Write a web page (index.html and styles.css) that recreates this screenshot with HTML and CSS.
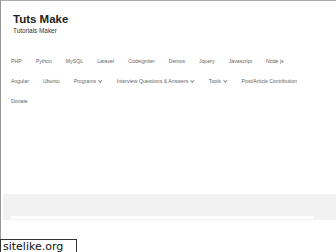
FILE: index.html
```html
<!DOCTYPE html>
<html lang="en">
<head>
    <meta charset="UTF-8">
    <meta name="viewport" content="width=device-width, initial-scale=1.0">
    <title>Tuts Make</title>
    <link rel="stylesheet" href="styles.css">
</head>
<body>
    <div class="page">
        <header class="site-header">
            <div class="site-title">Tuts Make</div>
            <div class="site-desc">Tutorials Maker</div>
        </header>
        <nav class="menu">
            <a href="#">PHP</a>
            <a href="#">Python</a>
            <a href="#">MySQL</a>
            <a href="#">Laravel</a>
            <a href="#">Codeigniter</a>
            <a href="#">Demos</a>
            <a href="#">Jquery</a>
            <a href="#">Javascript</a>
            <a href="#">Node js</a>
            <a href="#">Angular</a>
            <a href="#">Ubuntu</a>
            <a href="#" class="has-sub">Programs</a>
            <a href="#" class="has-sub">Interview Questions &amp; Answers</a>
            <a href="#" class="has-sub">Tools</a>
            <a href="#">Post/Article Contribution</a>
            <a href="#">Donate</a>
        </nav>
        <div class="content"></div>
        <div class="band">
            <div class="band-bar"></div>
        </div>
    </div>
    <div class="stamp">sitelike.org</div>
</body>
</html>
```

FILE: styles.css
```css
body {
    margin: 0;
    background: #fff;
    font-family: "Liberation Sans", Arial, sans-serif;
}
.page {
    border-top: 1px solid #aaa;
    border-left: 1px solid #999;
    height: 239px;
    box-sizing: border-box;
}
.site-header {
    padding: 11px 0 0 12px;
}
.site-title {
    font-size: 11.5px;
    font-weight: bold;
    line-height: 14px;
    color: #222;
}
.site-desc {
    font-size: 6.4px;
    line-height: 8px;
    color: #333;
    margin-top: 1px;
}
.menu {
    display: flex;
    flex-wrap: wrap;
    width: 312px;
    padding: 16px 0 0 3px;
    box-sizing: border-box;
}
.menu a {
    font-size: 5.2px;
    line-height: 20px;
    padding: 0 7px;
    color: #666;
    text-decoration: none;
}
.menu a.has-sub::after {
    content: "";
    display: inline-block;
    width: 1.6px;
    height: 1.6px;
    margin: 0 1px 1px 3px;
    border-right: 0.6px solid #888;
    border-bottom: 0.6px solid #888;
    transform: rotate(45deg);
}
.content {
    height: 83px;
}
.band {
    margin-left: 2px;
    height: 26px;
    background: #f2f2f2;
    padding: 22px 0 0 8px;
    box-sizing: border-box;
}
.band-bar {
    width: 303px;
    height: 3px;
    background: #fff;
}
.stamp {
    position: absolute;
    left: 0;
    top: 239px;
    width: 77px;
    height: 16px;
    box-sizing: border-box;
    border: 1px solid #333;
    background: #fff;
    font-family: "DejaVu Sans", sans-serif;
    font-size: 11px;
    line-height: 13px;
    padding-left: 2px;
    color: #111;
}
```
